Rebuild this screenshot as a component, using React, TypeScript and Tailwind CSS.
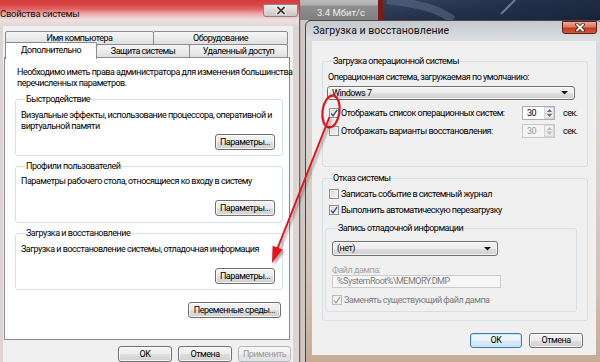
import React from "react";

type P = { className?: string; children?: React.ReactNode };

function Btn({ className = "", children, variant = "normal" }: P & { variant?: "normal" | "default" | "disabled" }) {
  const v =
    variant === "default"
      ? "border-[#3c7fb1] bg-[linear-gradient(180deg,#f4fafd_0%,#e9f3f9_50%,#d9eaf5_51%,#cde3f1_100%)] shadow-[inset_0_0_0_1px_#c4e6f8] text-black"
      : variant === "disabled"
      ? "border-[#b5b8bb] bg-[linear-gradient(180deg,#f6f6f6_0%,#efefef_50%,#e6e6e6_51%,#e1e1e1_100%)] text-[#9c9c9c]"
      : "border-[#707070] bg-[linear-gradient(180deg,#f3f3f3_0%,#ececec_50%,#dedede_51%,#d0d0d0_100%)] shadow-[inset_0_0_0_1px_rgba(255,255,255,0.75)] text-black";
  return (
    <div className={`flex items-center justify-center rounded-[3px] border whitespace-nowrap leading-none ${v} ${className}`}>
      {children}
    </div>
  );
}

function Tab({ className = "", children }: P) {
  return (
    <div
      className={`flex items-center justify-center border border-[#898c95] rounded-t-[2px] bg-[linear-gradient(180deg,#f5f5f5_0%,#ebebeb_50%,#dfdfdf_100%)] whitespace-nowrap leading-none ${className}`}
    >
      {children}
    </div>
  );
}

function Cb({ checked = false, disabled = false }: { checked?: boolean; disabled?: boolean }) {
  return (
    <span
      className={`flex h-[10px] w-[10px] shrink-0 items-center justify-center border ${
        disabled ? "border-[#bcbcbc] bg-[#f4f4f4]" : "border-[#8f8f8f] bg-[linear-gradient(135deg,#d9d9d9_0%,#f6f6f6_100%)] shadow-[inset_0_0_0_1px_#f4f4f4]"
      }`}
    >
      {checked && (
        <svg width="8" height="8" viewBox="0 0 8 8">
          <path d="M1 4.3 L3 6.8 L7.2 0.8" fill="none" stroke={disabled ? "#a8a8a8" : "#34497d"} strokeWidth="1.3" />
        </svg>
      )}
    </span>
  );
}

function Arrow() {
  return (
    <svg width="7" height="4" viewBox="0 0 7 4">
      <path d="M0 0 H7 L3.5 3.5 Z" fill="#111" />
    </svg>
  );
}

function Combo({ className = "", children }: P) {
  return (
    <div
      className={`flex items-center justify-between rounded-[3px] border border-[#707070] bg-[linear-gradient(180deg,#f3f3f3_0%,#ececec_50%,#dedede_51%,#d0d0d0_100%)] shadow-[inset_0_0_0_1px_rgba(255,255,255,0.75)] pl-[4px] pr-[6px] leading-none ${className}`}
    >
      <span>{children}</span>
      <Arrow />
    </div>
  );
}

function Spin({ disabled = false }: { disabled?: boolean }) {
  return (
    <div className={`flex h-[14px] w-[33px] shrink-0 border ${disabled ? "border-[#c8c8c8] bg-[#f4f4f4] text-[#9a9a9a]" : "border-[#abadb3] bg-white"}`}>
      <span className="flex flex-1 items-center pl-[4px] leading-none">30</span>
      <div className="flex w-[10px] flex-col">
        <div className="flex flex-1 items-center justify-center border border-[#d4d4d4] bg-[linear-gradient(180deg,#f7f7f7,#e6e6e6)]">
          <svg width="5" height="3" viewBox="0 0 5 3">
            <path d="M0 3 H5 L2.5 0 Z" fill={disabled ? "#b8b8b8" : "#5a6e8c"} />
          </svg>
        </div>
        <div className="flex flex-1 items-center justify-center border border-t-0 border-[#d4d4d4] bg-[linear-gradient(180deg,#f7f7f7,#e6e6e6)]">
          <svg width="5" height="3" viewBox="0 0 5 3">
            <path d="M0 0 H5 L2.5 3 Z" fill={disabled ? "#b8b8b8" : "#5a6e8c"} />
          </svg>
        </div>
      </div>
    </div>
  );
}

function CloseX({ active }: { active: boolean }) {
  return (
    <svg width="10" height="9" viewBox="0 0 10 9">
      <path d="M2 1.5 L8 7.5 M8 1.5 L2 7.5" stroke={active ? "#5a1a10" : "#ffffff"} strokeWidth="3.4" strokeLinecap="square" />
      <path d="M2 1.5 L8 7.5 M8 1.5 L2 7.5" stroke={active ? "#ffffff" : "#3f3f3f"} strokeWidth="1.8" strokeLinecap="square" />
    </svg>
  );
}

export default function App() {
  return (
    <div className="relative h-[362px] w-[600px] overflow-hidden bg-[linear-gradient(90deg,#6d4d45_0px,#6d4d45_296px,#9f8a84_297px,#a3908a_300px,#cfcac7_301px,#c9c4c1_308px,#7d5f57_309px,#7d5f57_311px,#cfc8c4_312px)] font-['Roboto','Liberation_Sans',sans-serif] text-[9px] leading-[11px] tracking-[-0.5px] text-black">
      {/* desktop background, top strip */}
      <div className="flex h-[20px]">
        <div className="w-[300px] bg-[#c24a48]" />
        <div className="flex w-[78px] flex-col bg-[linear-gradient(180deg,#b9b9b9_0px,#b1b1b1_5px,#8f8f8f_6px,#7f7f7f_100%)]">
          <div className="h-[6px]" />
          <div className="flex flex-1 items-center pl-[17px] text-[9.5px] leading-none tracking-normal text-[#ededed]">3.4 Мбит/с</div>
        </div>
        <div className="w-[5px] bg-[#7a1a1a]" />
        <div className="relative flex-1 overflow-hidden bg-[linear-gradient(170deg,#34435f_0%,#24304b_45%,#18223a_100%)]">
          <svg className="absolute inset-0" width="220" height="20" viewBox="0 0 220 20">
            <path d="M4 0 C30 4 52 6 70 20" stroke="#5d6d87" strokeWidth="8" fill="none" opacity="0.55" />
            <path d="M132 0 C126 6 122 10 118 14" stroke="#8c98ab" strokeWidth="2" fill="none" opacity="0.7" />
          </svg>
        </div>
      </div>

      {/* Left window: Свойства системы */}
      <div className="absolute left-[-4px] top-[-6px] flex h-[380px] w-[304px] flex-col rounded-[6px] border border-[#6c6363] bg-[#ddd5d2]">
        <div className="flex h-[31px] items-start justify-between rounded-t-[5px] bg-[linear-gradient(180deg,#d23636_0%,#d94444_30%,#e06262_45%,#ebaeae_62%,#ece0de_80%,#dfd8d6_100%)] pl-[3px]">
          <span className="mt-[13px] whitespace-nowrap text-[9.5px] leading-[12px] tracking-[-0.3px] text-[#111]">Свойства системы</span>
          <div className="mr-[1px] mt-[9px] flex h-[13px] w-[35px] items-center justify-center rounded-b-[3px] border border-[#8a8584] bg-[linear-gradient(180deg,#ece9e9_0%,#dcd8d7_50%,#cbc6c5_100%)]">
            <CloseX active={false} />
          </div>
        </div>
        <div className="mx-[6px] flex flex-1 flex-col bg-[#f0f0f0] pl-[1px] pr-[3px] pt-[5px]">
          {/* tabs */}
          <div className="ml-[1px] flex w-[283px] flex-col">
            <div className="flex h-[14px]">
              <Tab className="w-[149px]">Имя компьютера</Tab>
              <Tab className="-ml-px flex-1">Оборудование</Tab>
            </div>
            <div className="relative z-10 -mt-px flex h-[14px]">
              <div className="-mt-[2px] flex h-[17px] w-[92px] items-start justify-center rounded-t-[2px] border border-b-0 border-[#898c95] bg-white pt-[3px] leading-none">
                Дополнительно
              </div>
              <Tab className="-ml-px w-[94px]">Защита системы</Tab>
              <Tab className="-ml-px flex-1">Удаленный доступ</Tab>
            </div>
          </div>
          {/* tab panel */}
          <div className="-mt-px flex h-[283px] flex-col border border-[#898c95] bg-white pl-[10px]">
            <div className="ml-[2px] mt-[8.5px] whitespace-nowrap">
              Необходимо иметь права администратора для изменения большинства
              <br />
              перечисленных параметров.
            </div>

            <fieldset className="mt-[5px] w-[268px] min-w-0 rounded-[3px] border border-[#d5dfe5] pb-[5px] pl-[5px] pr-[7px]">
              <legend className="ml-[4px] px-[1px] leading-[11px]">Быстродействие</legend>
              <div className="mt-[5px] whitespace-nowrap">
                Визуальные эффекты, использование процессора, оперативной и
                <br />
                виртуальной памяти
              </div>
              <div className="mt-[2.5px] flex justify-end">
                <Btn className="h-[16px] w-[60px]">Параметры...</Btn>
              </div>
            </fieldset>

            <fieldset className="mt-[4.5px] w-[268px] min-w-0 rounded-[3px] border border-[#d5dfe5] pb-[6px] pl-[5px] pr-[7px]">
              <legend className="ml-[4px] px-[1px] leading-[11px]">Профили пользователей</legend>
              <div className="mt-[4px] whitespace-nowrap">Параметры рабочего стола, относящиеся ко входу в систему</div>
              <div className="mt-[13.5px] flex justify-end">
                <Btn className="h-[16px] w-[60px]">Параметры...</Btn>
              </div>
            </fieldset>

            <fieldset className="mt-[4.5px] w-[268px] min-w-0 rounded-[3px] border border-[#d5dfe5] pb-[5px] pl-[5px] pr-[7px]">
              <legend className="ml-[4px] px-[1px] leading-[11px]">Загрузка и восстановление</legend>
              <div className="mt-[5px] whitespace-nowrap">Загрузка и восстановление системы, отладочная информация</div>
              <div className="mt-[13.5px] flex justify-end">
                <Btn className="h-[16px] w-[60px]">Параметры...</Btn>
              </div>
            </fieldset>

            <Btn className="mr-[8px] mt-[12px] h-[16px] w-[93px] self-end">Переменные среды...</Btn>
          </div>
          {/* bottom buttons */}
          <div className="-mr-[1px] mt-[6px] flex justify-end gap-[6px]">
            <Btn className="h-[16px] w-[54px]">OK</Btn>
            <Btn className="h-[16px] w-[54px]">Отмена</Btn>
            <Btn className="h-[16px] w-[53px]" variant="disabled">
              Применить
            </Btn>
          </div>
        </div>
      </div>

      {/* Right window: Загрузка и восстановление */}
      <div className="absolute left-[305px] top-[20px] flex h-[345px] w-[298px] flex-col rounded-t-[6px] border border-[#4a4746] bg-[linear-gradient(180deg,#c4c8cd_0%,#dadcdf_5%,#d8d3cf_35%,#d2c2b4_75%,#c5ab95_100%)]">
        <div className="flex h-[20px] items-start justify-between pl-[7px]">
          <span className="mt-[4px] whitespace-nowrap text-[10.5px] leading-[12px] tracking-normal text-[#111]">Загрузка и восстановление</span>
          <div className="mr-[5px] flex h-[13px] w-[35px] items-center justify-center rounded-b-[3px] border border-[#5b1f14] bg-[linear-gradient(180deg,#eaa898_0%,#d97a63_45%,#c23b20_55%,#d55a3e_100%)]">
            <CloseX active />
          </div>
        </div>
        <div className="mx-[6px] flex h-[314px] flex-col bg-[#f0f0f0] pl-[10px] pt-[14.5px]">
          {/* Загрузка операционной системы */}
          <fieldset className="w-[266px] min-w-0 rounded-[3px] border border-[#d5dfe5] pb-[28px] pl-[5px]">
            <legend className="ml-[5px] leading-[11px]">Загрузка операционной системы</legend>
            <div className="mt-[5px] whitespace-nowrap">Операционная система, загружаемая по умолчанию:</div>
            <Combo className="-ml-[1px] mt-[3.5px] h-[14px] w-[248px]">Windows 7</Combo>
            <div className="ml-[1px] mt-[6px] flex h-[14px] items-center">
              <Cb checked />
              <span className="ml-[2px] w-[181px] shrink-0 whitespace-nowrap">Отображать список операционных систем:</span>
              <Spin />
              <span className="ml-[8px]">сек.</span>
            </div>
            <div className="ml-[1px] mt-[4px] flex h-[14px] items-center">
              <Cb />
              <span className="ml-[2px] w-[181px] shrink-0 whitespace-nowrap">Отображать варианты восстановления:</span>
              <Spin disabled />
              <span className="ml-[8px]">сек.</span>
            </div>
          </fieldset>

          {/* Отказ системы */}
          <fieldset className="mt-[5.5px] w-[266px] min-w-0 rounded-[3px] border border-[#d5dfe5] pb-[8px] pl-[6px]">
            <legend className="ml-[4px] leading-[11px]">Отказ системы</legend>
            <div className="mt-[4.5px] flex h-[12px] items-center">
              <Cb />
              <span className="ml-[2px] whitespace-nowrap">Записать событие в системный журнал</span>
            </div>
            <div className="mt-[4px] flex h-[12px] items-center">
              <Cb checked />
              <span className="ml-[2px] whitespace-nowrap">Выполнить автоматическую перезагрузку</span>
            </div>

            <fieldset className="-ml-[4px] mt-[6.5px] w-[252px] min-w-0 rounded-[3px] border border-[#d5dfe5] pb-[5px] pl-[6px]">
              <legend className="ml-[6px] leading-[11px]">Запись отладочной информации</legend>
              <Combo className="mt-[7.5px] h-[15px] w-[166px]">(нет)</Combo>
              <div className="mt-[9px] leading-[10px] text-[#a3a3a3]">Файл дампа:</div>
              <div className="flex h-[13px] w-[169px] items-center border border-[#c9cbcf] bg-[#f6f6f6] pl-[4px] leading-none text-[#7b7b7b]">
                %SystemRoot%\MEMORY.DMP
              </div>
              <div className="mt-[6px] flex h-[12px] items-center">
                <Cb checked disabled />
                <span className="ml-[2px] whitespace-nowrap text-[#7d7d7d]">Заменять существующий файл дампа</span>
              </div>
            </fieldset>
          </fieldset>

          <div className="mt-[12px] flex justify-end gap-[7px] pr-[13px]">
            <Btn className="h-[15px] w-[52px]" variant="default">
              OK
            </Btn>
            <Btn className="h-[15px] w-[54px]">Отмена</Btn>
          </div>
        </div>
      </div>

      {/* red annotation */}
      <svg className="pointer-events-none absolute left-0 top-0" width="600" height="362" viewBox="0 0 600 362">
        <defs>
          <filter id="sh" x="-20%" y="-20%" width="140%" height="140%">
            <feDropShadow dx="2" dy="2" stdDeviation="1.2" floodColor="#000" floodOpacity="0.35" />
          </filter>
        </defs>
        <ellipse cx="331" cy="111.5" rx="8.5" ry="16" fill="none" stroke="#e3121b" strokeWidth="2.2" transform="rotate(8 331 111.5)" />
        <g filter="url(#sh)">
          <line x1="329.5" y1="117" x2="276.5" y2="251" stroke="#e3121b" strokeWidth="2" />
          <polygon points="272,263 282.6,249.6 272.6,245.8" fill="#e3121b" />
        </g>
      </svg>
    </div>
  );
}
